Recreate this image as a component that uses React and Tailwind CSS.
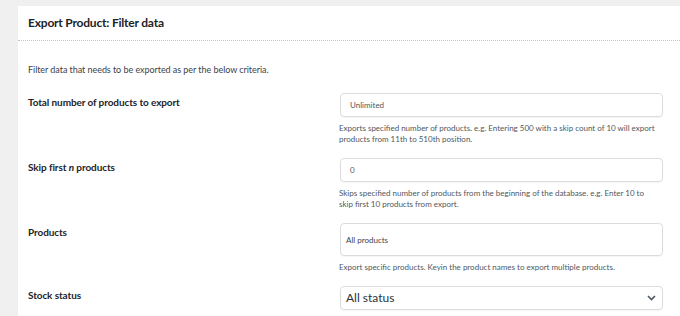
import React from "react";

const font = { fontFamily: 'Lato, "Open Sans", sans-serif' };

function Row({ label, children, help, last }) {
  return (
    <div className={`grid grid-cols-[312px_323px] ${last ? "" : "pb-[13px]"}`}>
      <div className="pt-[1px] text-[10px] leading-[16px] font-bold tracking-[-0.1px] text-[#1d2327]">{label}</div>
      <div>
        {children}
        {help && (
          <div className="mt-[6px] w-[320px] text-[8px] leading-[11px] text-[#50575e] -ml-[1px]">{help}</div>
        )}
      </div>
    </div>
  );
}

export default function App() {
  return (
    <div className="w-[680px] h-[316px] overflow-hidden bg-[#f0f0f1] pl-[18px] pt-[6px]" style={font}>
      <div className="bg-white h-[400px]">
        <div className="h-[35px] border-b border-dotted border-[#c3c4c7] pl-[10px] pt-[8px] text-[12px] leading-[18px] font-bold tracking-[-0.2px] text-[#1d2327]">
          Export Product: Filter data
        </div>
        <div className="pl-[10px] pt-[21px]">
          <div className="text-[9px] leading-[16px] tracking-[-0.05px] text-[#3c434a]">
            Filter data that needs to be exported as per the below criteria.
          </div>
          <div className="mt-[15px]">
            <Row
              label="Total number of products to export"
              help={<>Exports specified number of products. e.g. Entering 500 with a skip count of 10 will export products from 11th to 510th position.</>}
            >
              <div className="h-[24px] border border-[#dcdcde] rounded-[4px] shadow-[0_1px_1px_rgba(0,0,0,0.04)] pl-[9px] flex items-center text-[8px] text-[#50575e]">
                Unlimited
              </div>
            </Row>
            <Row
              label={<>Skip first <em className="italic">n</em> products</>}
              help="Skips specified number of products from the beginning of the database. e.g. Enter 10 to skip first 10 products from export."
            >
              <div className="h-[24px] border border-[#dcdcde] rounded-[4px] shadow-[0_1px_1px_rgba(0,0,0,0.04)] pl-[9px] flex items-center text-[8px] text-[#50575e]">
                0
              </div>
            </Row>
            <Row
              label="Products"
              help="Export specific products. Keyin the product names to export multiple products."
            >
              <div className="h-[33px] border border-[#dcdcde] rounded-[4px] shadow-[0_1px_1px_rgba(0,0,0,0.04)] pl-[5px] flex items-center text-[8px] text-[#3c434a]">
                All products
              </div>
            </Row>
            <Row label="Stock status" last>
              <div className="h-[24px] border border-[#dcdcde] rounded-[4px] shadow-[0_1px_1px_rgba(0,0,0,0.04)] pl-[5px] pr-[6px] flex items-center justify-between text-[12px] text-[#2c3338]">
                <span>All status</span>
                <svg width="9" height="6" viewBox="0 0 9 6" fill="none">
                  <path d="M1 1l3.5 3.5L8 1" stroke="#50575e" strokeWidth="1.6" />
                </svg>
              </div>
            </Row>
          </div>
        </div>
      </div>
    </div>
  );
}
